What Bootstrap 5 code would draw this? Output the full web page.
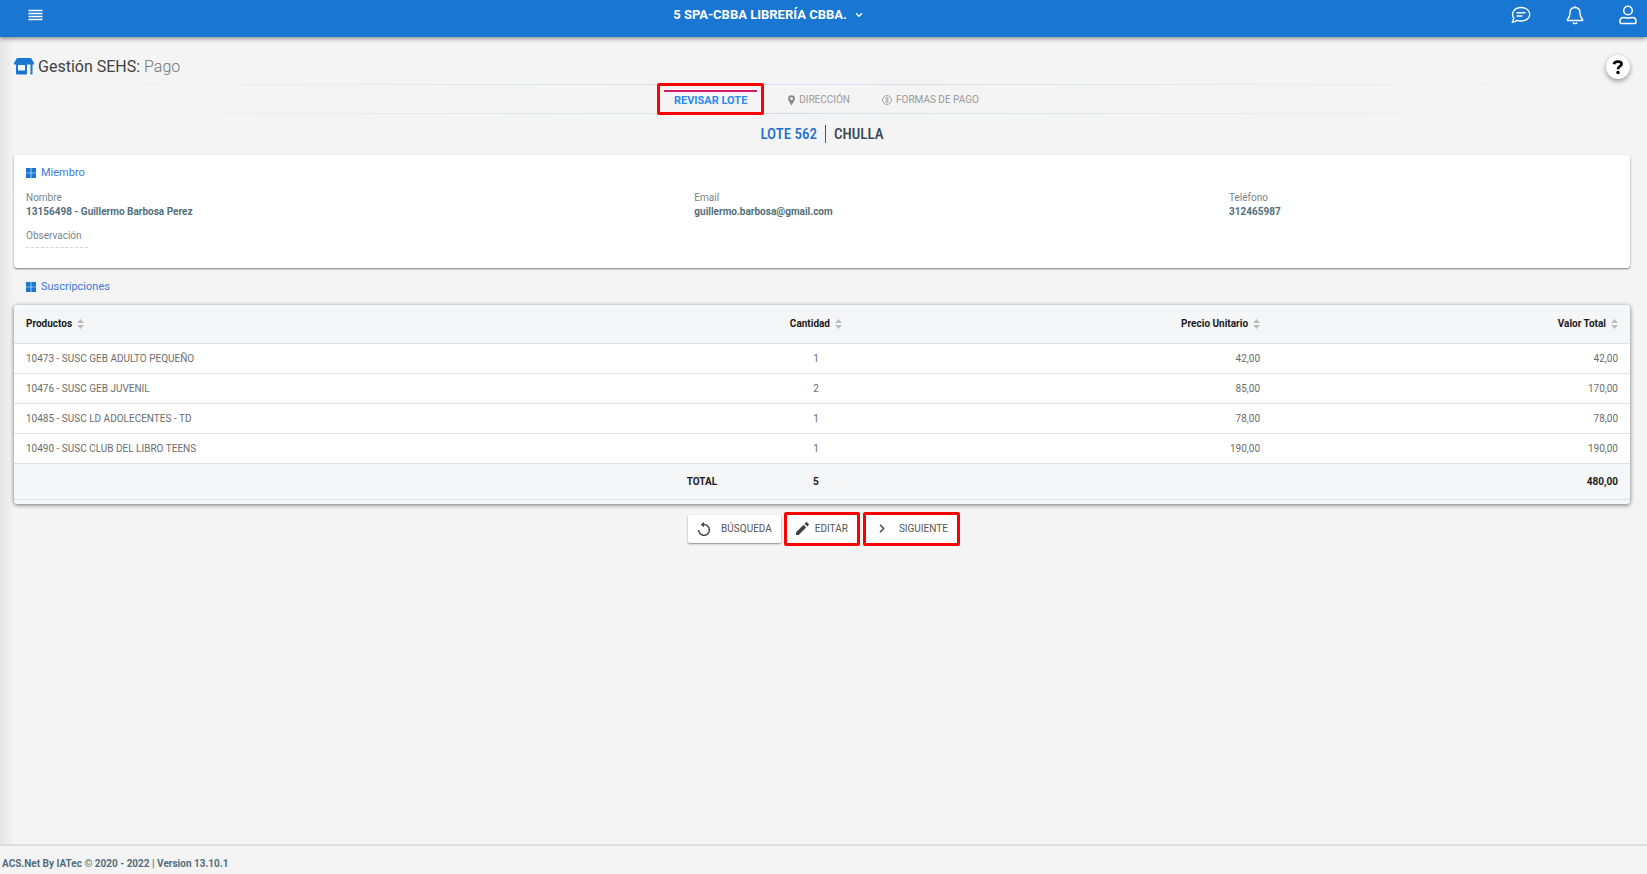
<!DOCTYPE html>
<html lang="es">
<head>
<meta charset="utf-8">
<meta name="viewport" content="width=device-width, initial-scale=1">
<title>Gestión SEHS: Pago</title>
<link href="https://cdn.jsdelivr.net/npm/bootstrap@5.3.0/dist/css/bootstrap.min.css" rel="stylesheet">
<style>
  body { font-family: Roboto, "Liberation Sans", sans-serif; font-size: 10px; line-height: 14px; color: #607078; background: #f4f4f4; }
  svg { display: block; flex: none; }
  .topbar { background: #1976d2; height: 37px; padding: 0 10px 8px 28px; box-shadow: 0 1px 5px rgba(0,0,0,.55); z-index: 2; }
  .topbar .btn { color: #fff; border: 0; }
  .top-start { flex: 5 0 0; }
  .top-end { flex: 6 0 0; gap: 35px; }
  .org-btn { font-size: 13px; line-height: 16px; font-weight: 700; }
  .page { padding: 18px 17px 0 14px; background: linear-gradient(90deg, #e6e6e6, #f4f4f4 14px); }
  .page-title { font-size: 16px; line-height: 24px; font-weight: 400; color: #424242; }
  .page-title span { font-weight: 300; color: #757575; }
  .help-btn { width: 24px; height: 24px; background: #fff; box-shadow: 0 2px 5px rgba(0,0,0,.4); }
  .steps { height: 30px; margin-top: 5px; background: linear-gradient(90deg, transparent, #d5dfe3 48%, transparent) top / 100% 1px no-repeat, linear-gradient(90deg, transparent, #d5dfe3 48%, transparent) bottom / 100% 1px no-repeat; }
  .steps a { color: #999; text-decoration: none; padding-top: 2px; }
  .steps .current { color: #2a8af0; font-weight: 700; font-size: 11px; border: 3px solid #f00; border-radius: 2px; padding: 4px; height: 32px; width: 107px; }
  .steps .current span { border-top: 2px solid #d81b60; line-height: 18px; text-align: center; }
  .lot-title { font-family: "Roboto Condensed", Roboto, sans-serif; font-size: 15px; line-height: 20px; font-weight: 500; color: #37474f; margin-top: 10px; }
  .lot-title .lot-no { color: #1e6fd0; }
  .lot-title .bar { width: 1px; height: 18px; background: #455a64; }
  .panel { background: #fff; border-radius: 3px; box-shadow: 0 1px 2px rgba(0,0,0,.5); }
  .member { padding: 10px 0 20px 12px; margin-top: 11px; }
  .section-title { font-size: 11px; line-height: 16px; font-weight: 400; color: #3f7ad6; gap: 5px; }
  .loose { padding: 11px 12px 10px; }
  .fields { margin-top: 10px; }
  .fields dt { font-weight: 400; color: #78848a; }
  .fields dd { font-size: 10px; font-weight: 700; margin: 0; color: #546e7a; }
  .fields .empty-value { width: 62px; border-top: 1px dashed #ccd5d9; margin-top: 4px; }
  .items { box-shadow: 0 1px 4px rgba(0,0,0,.55); padding-bottom: 4px; background: #f4f6f8; overflow: hidden; }
  .items table { table-layout: fixed; line-height: 14px; }
  .items th, .items td { padding: 1px 12px 0; border-bottom: 1px solid #dfe2e4; vertical-align: middle; }
  .items thead th { height: 38px; font-weight: 700; color: #1a1a1a; }
  .items tbody td { height: 30px; background: #fff; color: #6c6c6c; }
  .items tfoot td { height: 36px; font-weight: 700; color: #1a1a1a; }
  .c-prod { width: 44.25%; } .c-qty { width: 10.75%; } .c-unit { width: 22.85%; }
  .sort { gap: 5px; }
  .actions { gap: 3px; margin-top: 8px; }
  .act { font-size: 10px; line-height: 14px; color: #555; background: #fff; border: 0; border-radius: 2px; height: 28px; padding: 0 9px; gap: 6px; box-shadow: 0 1px 2px rgba(0,0,0,.45); }
  .act.framed { border: 3px solid #f00; height: 34px; box-shadow: none; }
  .foot { border-top: 2px solid #dcdcdc; padding: 11px 2px 3px; font-weight: 700; color: #546e7a; }
</style>
</head>
<body class="d-flex flex-column min-vh-100">
<header class="topbar d-flex align-items-center position-relative">
  <div class="top-start d-flex"><button class="btn p-0" aria-label="Menú"><svg width="15" height="12" viewBox="0 0 15 12" stroke="#fff" stroke-width="1.4"><path d="M.5 1.500h14M.5 4.500h14M.5 7.500h14M.5 10.500h14"/></svg></button></div>
  <button class="btn p-0 org-btn d-flex align-items-center">5 SPA-CBBA LIBRERÍA CBBA.<svg class="ms-2" width="8" height="6" viewBox="0 0 8 6" fill="none" stroke="#fff" stroke-width="1.3"><path d="M1 1.300l3 3 3-3"/></svg></button>
  <div class="top-end d-flex justify-content-end align-items-center">
    <button class="btn p-0" aria-label="Mensajes"><svg width="20" height="18" viewBox="0 0 20 18" fill="none" stroke="#fff" stroke-width="1.4" stroke-linejoin="round" stroke-linecap="round"><path d="M2.800 12.200C-.5 7 3.500 1.500 10 1.500c5 0 8.800 3 8.800 6.800S15 15 10 15c-1.400 0-2.700-.2-3.900-.7-1.300 1.100-3 1.700-4.900 1.900.8-1 1.400-2.200 1.600-4zM6 6.800h8M6 10h5"/></svg></button>
    <button class="btn p-0" aria-label="Notificaciones"><svg width="18" height="20" viewBox="0 0 18 20" fill="none" stroke="#fff" stroke-width="1.4" stroke-linejoin="round"><path d="M9 1v1.500M9 2.500C5.600 2.500 4 5 4 8c0 4-1.200 5-2.600 6.500v1h15.200v-1C15.200 13 14 12 14 8c0-3-1.600-5.500-5-5.500zM7 17.500c.5 1.500 3.500 1.500 4 0"/></svg></button>
    <button class="btn p-0" aria-label="Usuario"><svg width="18" height="20" viewBox="0 0 18 20" fill="none" stroke="#fff" stroke-width="1.500"><circle cx="9" cy="5.500" r="4.300"/><path d="M4.500 12.500c1.500 0 2.500.6 4.500.6s3-.6 4.500-.6c2 0 3.500 1.500 3.500 4v.8c0 .7-.5 1.200-1.200 1.200H2.200c-.7 0-1.200-.5-1.200-1.200v-.8c0-2.500 1.500-4 3.500-4z"/></svg></button>
  </div>
</header>

<main class="page flex-grow-1">
  <div class="d-flex justify-content-between align-items-center">
    <h1 class="page-title d-flex align-items-center m-0"><svg class="me-1" width="20" height="18" viewBox="0 0 20 18" fill="#1976d2"><path d="M3 0h14l3 5v1.500H0V5z"/><path fill-rule="evenodd" d="M2 6h11v9.500a1 1 0 0 1-1 1H3a1 1 0 0 1-1-1zm2 1v5.500h7V7z"/><path d="M16.500 6h2v10.500h-2z"/></svg>Gestión SEHS:&nbsp;<span>Pago</span></h1>
    <button class="btn help-btn rounded-circle border-0 p-0 d-flex align-items-center justify-content-center" aria-label="Ayuda"><svg width="12" height="16" viewBox="0 0 12 16" fill="none" stroke="#000" stroke-width="2.700"><path d="M2 5.300C2.300 3.300 4 2.700 6 2.700c2.300 0 3.600.9 3.600 2.400C9.600 7.300 6 7.200 6 10.300"/><circle cx="6" cy="13.500" r="1.700" fill="#000" stroke="none"/></svg></button>
  </div>
  <nav class="steps d-flex justify-content-center align-items-center pe-2">
    <a class="current d-flex flex-column" href="#"><span>REVISAR LOTE</span></a>
    <a class="d-flex align-items-center ms-4" href="#"><svg class="me-1" width="7" height="11" viewBox="0 0 7 11" fill="#8a8a8a"><path fill-rule="evenodd" d="M3.500.2A3.400 3.400 0 0 0 .1 3.700C.1 6 2 7 3.500 10.800 5 7 6.900 6 6.900 3.700A3.400 3.400 0 0 0 3.500.2zm0 2a1.400 1.400 0 1 1 0 2.900 1.400 1.400 0 0 1 0-2.900z"/></svg>DIRECCIÓN</a>
    <a class="d-flex align-items-center ms-4 ps-2" href="#"><svg class="me-1" width="10" height="10" viewBox="0 0 11 11" fill="none" stroke="#9e9e9e"><circle cx="5.500" cy="5.500" r="4.900"/><path d="M7.300 4C7 3.200 6.300 3 5.500 3c-2.200 0-2.200 2.200 0 2.500s2.200 2.500 0 2.500C4.500 8 3.800 7.700 3.600 7M5.500 2v7" stroke-width=".9"/></svg>FORMAS DE PAGO</a>
  </nav>
  <h2 class="lot-title d-flex justify-content-center align-items-center mb-0"><span class="lot-no">LOTE 562</span><span class="bar mx-2"></span><span>CHULLA</span></h2>

  <section class="panel member">
    <h3 class="section-title d-flex align-items-center m-0"><svg width="10" height="10" viewBox="0 0 10 10" fill="#1976d2"><path d="M0 0h4.700v4.700H0zM5.300 0H10v4.700H5.300zM0 5.300h4.700V10H0zM5.300 5.300H10V10H5.300z"/></svg>Miembro</h3>
    <div class="fields row g-0">
      <dl class="col-5 m-0"><dt>Nombre</dt><dd>13156498 - Guillermo Barbosa Perez</dd></dl>
      <dl class="col-4 m-0"><dt>Email</dt><dd>guillermo.barbosa@gmail.com</dd></dl>
      <dl class="col-3 m-0"><dt>Teléfono</dt><dd>312465987</dd></dl>
    </div>
    <dl class="fields mb-0"><dt>Observación</dt><dd class="empty-value"></dd></dl>
  </section>

  <h3 class="section-title loose d-flex align-items-center m-0"><svg width="10" height="10" viewBox="0 0 10 10" fill="#1976d2"><path d="M0 0h4.700v4.700H0zM5.300 0H10v4.700H5.300zM0 5.300h4.700V10H0zM5.300 5.300H10V10H5.300z"/></svg>Suscripciones</h3>

  <section class="panel items">
    <table class="w-100">
      <thead><tr>
        <th class="c-prod" scope="col"><span class="sort d-flex align-items-center">Productos<svg width="7" height="10" viewBox="0 0 7 10" fill="#bdbdbd"><path d="M0 4l3.500-4L7 4zM0 6h7l-3.500 4z"/></svg></span></th>
        <th class="c-qty" scope="col"><span class="sort d-flex align-items-center justify-content-center">Cantidad<svg width="7" height="10" viewBox="0 0 7 10" fill="#bdbdbd"><path d="M0 4l3.500-4L7 4zM0 6h7l-3.500 4z"/></svg></span></th>
        <th class="c-unit" scope="col"><span class="sort d-flex align-items-center justify-content-end">Precio Unitario<svg width="7" height="10" viewBox="0 0 7 10" fill="#bdbdbd"><path d="M0 4l3.500-4L7 4zM0 6h7l-3.500 4z"/></svg></span></th>
        <th scope="col"><span class="sort d-flex align-items-center justify-content-end">Valor Total<svg width="7" height="10" viewBox="0 0 7 10" fill="#bdbdbd"><path d="M0 4l3.500-4L7 4zM0 6h7l-3.500 4z"/></svg></span></th>
      </tr></thead>
      <tbody>
        <tr><td>10473 - SUSC GEB ADULTO PEQUEÑO</td><td class="text-center">1</td><td class="text-end">42,00</td><td class="text-end">42,00</td></tr>
        <tr><td>10476 - SUSC GEB JUVENIL</td><td class="text-center">2</td><td class="text-end">85,00</td><td class="text-end">170,00</td></tr>
        <tr><td>10485 - SUSC LD ADOLECENTES - TD</td><td class="text-center">1</td><td class="text-end">78,00</td><td class="text-end">78,00</td></tr>
        <tr><td>10490 - SUSC CLUB DEL LIBRO TEENS</td><td class="text-center">1</td><td class="text-end">190,00</td><td class="text-end">190,00</td></tr>
      </tbody>
      <tfoot><tr><td class="text-end">TOTAL</td><td class="text-center">5</td><td></td><td class="text-end">480,00</td></tr></tfoot>
    </table>
  </section>

  <div class="actions d-flex justify-content-center align-items-center ps-1">
    <button class="btn act d-flex align-items-center"><svg class="me-1" width="14" height="14" viewBox="0 0 14 14" fill="none" stroke="#444" stroke-width="1.500"><path d="M1.600 8A5.400 5.400 0 1 0 7 2.600H5"/><path d="M7 0v5.200L3.800 2.600z" fill="#444" stroke="none"/></svg>BÚSQUEDA</button>
    <button class="btn act framed d-flex align-items-center"><svg width="13" height="13" viewBox="0 0 13 13" fill="#444"><path d="M0 10.300V13h2.700l7.500-7.500-2.700-2.700zM12.700 3c.3-.3.3-.7 0-1L11 .3c-.3-.3-.7-.3-1 0L8.500 1.800l2.700 2.700z"/></svg>EDITAR</button>
    <button class="btn act framed d-flex align-items-center"><svg class="mx-1" width="6" height="9" viewBox="0 0 6 9" fill="none" stroke="#444" stroke-width="1.400"><path d="M1 .8l3.700 3.700L1 8.200"/></svg><span class="ps-1">SIGUIENTE</span></button>
  </div>
</main>

<footer class="foot">ACS.Net By IATec © 2020 - 2022 | Version 13.10.1</footer>
<script src="https://cdn.jsdelivr.net/npm/bootstrap@5.3.0/dist/js/bootstrap.bundle.min.js"></script>
</body>
</html>
